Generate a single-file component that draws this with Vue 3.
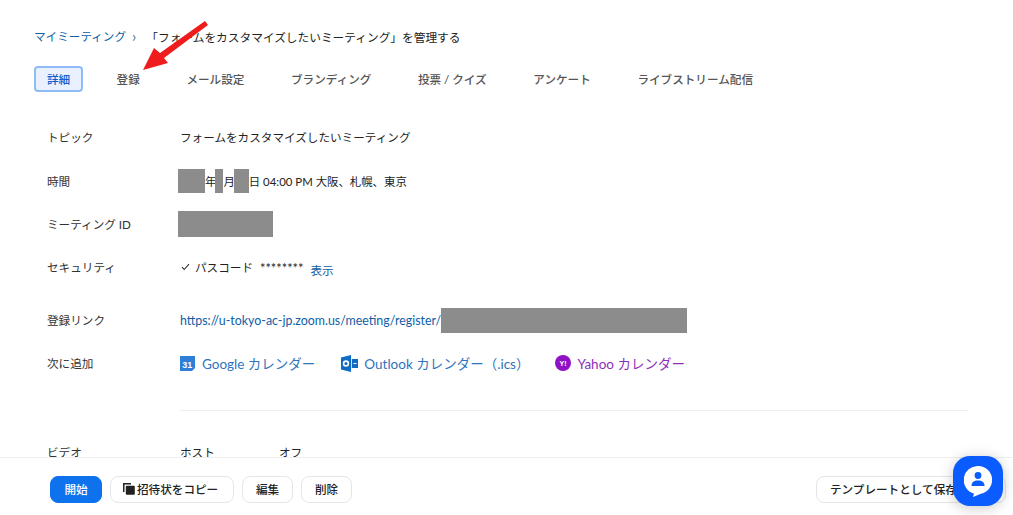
<template>
  <div class="page">
    <main class="content">
      <nav class="crumbs">
        <a class="link">マイミーティング</a>
        <span class="chev">›</span>
        <span class="crumb-title">「フォームをカスタマイズしたいミーティング」を管理する</span>
      </nav>
      <div class="tabs">
        <span v-for="t in tabs" :key="t" class="tab" :class="{ active: t === '詳細' }">{{ t }}</span>
      </div>
      <div class="details">
        <div class="row r-topic"><div class="label">トピック</div><div class="value">フォームをカスタマイズしたいミーティング</div></div>
        <div class="row r-time">
          <div class="label">時間</div>
          <div class="value time"><i class="mask m1"></i><span>年</span><i class="mask m2"></i><span>月</span><i class="mask m3"></i><span>日 04:00 PM 大阪、札幌、東京</span></div>
        </div>
        <div class="row r-id"><div class="label">ミーティング ID</div><div class="value"><i class="mask m4"></i></div></div>
        <div class="row r-sec">
          <div class="label">セキュリティ</div>
          <div class="value sec">
            <svg class="check" width="9" height="8" viewBox="0 0 9 8"><path d="M1 4.2 3.2 6.500 8 1.200" fill="none" stroke="#333" stroke-width="1.1"/></svg>
            <span>パスコード</span><span class="stars">********</span><a class="link show">表示</a>
          </div>
        </div>
        <div class="row r-link">
          <div class="label">登録リンク</div>
          <div class="value reg"><a class="link">https://u-tokyo-ac-jp.zoom.us/meeting/register/</a><i class="mask m5"></i></div>
        </div>
        <div class="row r-add">
          <div class="label">次に追加</div>
          <div class="value cals">
            <a class="cal blue">
              <svg width="15" height="16" viewBox="0 0 15 16"><path d="M0 1h15v12l-3 3H0z" fill="#2f7ed8"/><text x="7.3" y="12.500" text-anchor="middle" font-size="9" font-weight="700" fill="#fff" font-family="Liberation Sans, sans-serif">31</text></svg>
              Google カレンダー
            </a>
            <a class="cal blue c2">
              <svg width="17" height="17" viewBox="0 0 17 17"><path d="M0 2.500 10 0v17L0 14.500z" fill="#0f6cc4"/><path d="M10.800 4H17v9h-6.200z" fill="#0f6cc4"/><path d="M12.500 8.500h3" stroke="#fff" stroke-width="1"/><circle cx="5" cy="8.500" r="2.400" fill="none" stroke="#fff" stroke-width="1.600"/></svg>
              Outlook カレンダー（.ics）
            </a>
            <a class="cal purple c3">
              <svg width="16" height="16" viewBox="0 0 16 16"><circle cx="8" cy="8" r="8" fill="#8f12c4"/><text x="8" y="10.500" text-anchor="middle" font-size="7" font-weight="700" fill="#fff" font-family="Liberation Sans, sans-serif">Y!</text></svg>
              Yahoo カレンダー
            </a>
          </div>
        </div>
        <hr class="divider" />
        <div class="row r-video">
          <div class="label">ビデオ</div>
          <div class="value video"><span class="v1">ホスト</span><span>オフ</span></div>
        </div>
      </div>
    </main>
    <footer class="footer">
      <div class="actions">
        <button class="btn primary">開始</button>
        <button class="btn copy">
          <svg width="12" height="12" viewBox="0 0 12 12"><path d="M0 0h8v1.500H1.500V9H0z" fill="#222"/><rect x="2.800" y="2.800" width="9" height="9" rx="1" fill="#222"/></svg>
          招待状をコピー
        </button>
        <button class="btn small">編集</button>
        <button class="btn small">削除</button>
      </div>
      <button class="btn template">テンプレートとして保存</button>
    </footer>
    <svg class="arrow" width="70" height="54" viewBox="0 0 70 54"><path d="M1 50 12 28 18 33 63 1 66 5 22 38 26 43z" fill="#ee1c1c"/></svg>
    <div class="chat">
      <svg width="28" height="31" viewBox="0 0 28 31"><path d="M14 0a14 14 0 0 1 3 27.700L9 31l1-3.500A14 14 0 0 1 14 0z" fill="#fff"/><circle cx="14" cy="9.500" r="3.400" fill="#0b5cff"/><path d="M7.500 20c0-4 2.500-5.500 6.500-5.500s6.500 1.500 6.500 5.500z" fill="#0b5cff"/></svg>
    </div>
  </div>
</template>

<script setup>
const tabs = ['詳細', '登録', 'メール設定', 'ブランディング', '投票 / クイズ', 'アンケート', 'ライブストリーム配信']
</script>

<style>
html, body { margin: 0; background: #fff; }
</style>

<style scoped>
.page {
  position: relative;
  width: 1013px;
  height: 515px;
  overflow: hidden;
  display: flex;
  flex-direction: column;
  background: #fff;
  color: #222;
  font-family: "Lato", "Noto Sans CJK JP", sans-serif;
  font-size: 11.600px;
}
.content { flex: 1; min-height: 0; overflow: hidden; padding: 28px 45px 0 34px; }
.crumbs { display: flex; align-items: center; height: 16px; }
.crumb-title { font-size: 11.700px; }
.link { color: #0e5ea8; }
.chev { margin: 0 10px 0 6px; font-size: 15px; color: #4a6f95; line-height: 16px; }
.tabs { display: flex; align-items: center; gap: 46.600px; margin-top: 22px; height: 26px; color: #555; font-weight: 500; }
.tab { white-space: nowrap; }
.tab.active {
  box-sizing: border-box;
  width: 49px;
  height: 26px;
  margin-right: -13px;
  display: flex;
  align-items: center;
  justify-content: center;
  border: 2px solid #8dbdf4;
  border-radius: 4px;
  background: #e8f1fd;
  color: #0e5ed0;
}
.details { padding: 0 0 0 13px; margin-top: 33px; }
.row { display: flex; align-items: center; }
.label { width: 133px; flex: none; color: #333; }
.value { flex: 1; min-width: 0; }
.r-topic { height: 24px; }
.r-time { height: 26px; margin-top: 19px; }
.r-id { height: 26px; margin-top: 17px; }
.r-sec { height: 20px; margin-top: 20px; }
.r-link { height: 26px; margin-top: 30px; }
.r-add { height: 24px; margin-top: 18px; }
.r-video { height: 14px; margin-top: 34px; }
.time { display: flex; align-items: center; margin-left: -2px; font-size: 11.400px; }
.mask { display: block; flex: none; background: #8c8c8c; height: 24px; }
.m1 { width: 27px; }
.m2 { width: 8px; margin-left: -1px; }
.m3 { width: 15px; margin-left: -1px; }
.m4 { width: 95px; height: 26px; margin-left: -2px; }
.sec { display: flex; align-items: center; }
.sec .check { margin: 0 5px 0 1px; }
.stars { margin-left: 7px; margin-top: 2px; font-size: 12.800px; }
.show { margin-left: 7px; margin-top: 5px; }
.reg { display: flex; align-items: center; }
.reg .link { font-size: 12.400px; }
.m5 { width: 246px; height: 25px; }
.cals { display: flex; align-items: center; font-size: 13.500px; }
.cal { display: inline-flex; align-items: center; gap: 7px; white-space: nowrap; }
.cal svg { flex: none; }
.blue { color: #2f74bd; }
.purple { color: #8e2fb8; }
.c2 { margin-left: 26px; gap: 6px; }
.c3 { margin-left: 26px; gap: 6px; }
.divider { border: 0; border-top: 1px solid #eeeeee; margin: 35px 0 0 133px; }
.video { display: flex; }
.v1 { width: 99px; }
.footer {
  flex: none;
  box-sizing: border-box;
  height: 58px;
  border-top: 1px solid #efefef;
  display: flex;
  align-items: center;
  justify-content: space-between;
  padding: 5px 0 0 50px;
  background: #fff;
}
.actions { display: flex; gap: 8px; }
.btn {
  box-sizing: border-box;
  height: 27px;
  padding: 0 13px;
  display: inline-flex;
  align-items: center;
  gap: 2px;
  background: #fff;
  border: 1px solid #e6e6e6;
  border-radius: 8px;
  color: #222;
  font: 500 11.600px "Lato", "Noto Sans CJK JP", sans-serif;
  white-space: nowrap;
}
.primary { background: #0e72ed; border-color: #0e72ed; color: #fff; width: 52px; justify-content: center; }
.copy { width: 124px; padding: 0 12px; }
.small { width: 51px; justify-content: center; padding: 0; }
.template { width: 190px; margin-right: 7px; justify-content: flex-start; padding: 0 13px; }
.arrow { position: absolute; left: 142px; top: 20px; }
.chat {
  position: absolute;
  left: 953px;
  top: 456px;
  width: 50px;
  height: 50px;
  border-radius: 17px;
  background: #0b5cff;
  display: flex;
  align-items: center;
  justify-content: center;
  box-shadow: 0 2px 14px rgba(0, 0, 0, .22);
}
</style>
